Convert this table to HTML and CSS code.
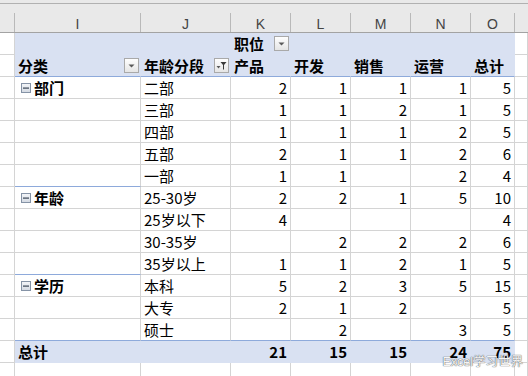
FILE: index.html
```html
<!DOCTYPE html>
<html lang="zh">
<head>
<meta charset="utf-8">
<title>数据透视表</title>
<link rel="stylesheet" href="styles.css">
</head>
<body>
<div class="sheet">
  <div class="topline"></div>
  <div class="row colheads">
    <div class="ch"></div>
    <div class="ch">I</div>
    <div class="ch">J</div>
    <div class="ch">K</div>
    <div class="ch">L</div>
    <div class="ch">M</div>
    <div class="ch">N</div>
    <div class="ch">O</div>
    <div class="ch end"></div>
  </div>

  <div class="row">
    <div class="c"></div>
    <div class="c pv"></div>
    <div class="c pv"></div>
    <div class="c pv fld"><span class="b">职位</span><svg class="btn" width="15" height="15" viewBox="0 0 15 15"><defs><linearGradient id="g1" x1="0" y1="0" x2="0" y2="1"><stop offset="0" stop-color="#ffffff"/><stop offset="1" stop-color="#e4e4e4"/></linearGradient></defs><rect x="0.5" y="0.5" width="14" height="14" fill="url(#g1)" stroke="#a9a9a9"/><polygon points="4.5,6.5 10.5,6.5 7.5,9.5" fill="#5a5a5a"/></svg></div>
    <div class="c pv"></div>
    <div class="c pv"></div>
    <div class="c pv"></div>
    <div class="c pv"></div>
    <div class="c"></div>
  </div>

  <div class="row hdr2">
    <div class="c"></div>
    <div class="c pv fld"><span class="b">分类</span><svg class="btn" width="15" height="15" viewBox="0 0 15 15"><rect x="0.5" y="0.5" width="14" height="14" fill="url(#g1)" stroke="#a9a9a9"/><polygon points="4.5,6.5 10.5,6.5 7.5,9.5" fill="#5a5a5a"/></svg></div>
    <div class="c pv fld"><span class="b">年龄分段</span><svg class="btn" width="15" height="15" viewBox="0 0 15 15"><rect x="0.5" y="0.5" width="14" height="14" fill="url(#g1)" stroke="#a9a9a9"/><polygon points="2.5,8 6.5,8 4.5,10.5" fill="#5a5a5a"/><polygon points="6.5,4 12.5,4 10,7 10,11.5 9,11.5 9,7" fill="#3a3a3a"/></svg></div>
    <div class="c pv t b">产品</div>
    <div class="c pv t b">开发</div>
    <div class="c pv t b">销售</div>
    <div class="c pv t b">运营</div>
    <div class="c pv t b">总计</div>
    <div class="c"></div>
  </div>

  <!-- 部门 -->
  <div class="row">
    <div class="c"></div>
    <div class="c grp"><svg class="minus" width="10" height="10" viewBox="0 0 10 10"><defs><linearGradient id="g2" x1="0" y1="0" x2="0" y2="1"><stop offset="0" stop-color="#f4f6f9"/><stop offset="1" stop-color="#d3d9e2"/></linearGradient></defs><rect x="0.5" y="0.5" width="9" height="9" fill="url(#g2)" stroke="#8593a6"/><rect x="2" y="4.5" width="6" height="1.2" fill="#3b4656"/></svg><span class="b">部门</span></div>
    <div class="c t">二部</div>
    <div class="c n">2</div><div class="c n">1</div><div class="c n">1</div><div class="c n">1</div><div class="c n">5</div>
    <div class="c"></div>
  </div>
  <div class="row">
    <div class="c"></div><div class="c"></div>
    <div class="c t">三部</div>
    <div class="c n">1</div><div class="c n">1</div><div class="c n">2</div><div class="c n">1</div><div class="c n">5</div>
    <div class="c"></div>
  </div>
  <div class="row">
    <div class="c"></div><div class="c"></div>
    <div class="c t">四部</div>
    <div class="c n">1</div><div class="c n">1</div><div class="c n">1</div><div class="c n">2</div><div class="c n">5</div>
    <div class="c"></div>
  </div>
  <div class="row">
    <div class="c"></div><div class="c"></div>
    <div class="c t">五部</div>
    <div class="c n">2</div><div class="c n">1</div><div class="c n">1</div><div class="c n">2</div><div class="c n">6</div>
    <div class="c"></div>
  </div>
  <div class="row">
    <div class="c"></div><div class="c gend"></div>
    <div class="c t">一部</div>
    <div class="c n">1</div><div class="c n">1</div><div class="c n"></div><div class="c n">2</div><div class="c n">4</div>
    <div class="c"></div>
  </div>

  <!-- 年龄 -->
  <div class="row">
    <div class="c"></div>
    <div class="c grp"><svg class="minus" width="10" height="10" viewBox="0 0 10 10"><rect x="0.5" y="0.5" width="9" height="9" fill="url(#g2)" stroke="#8593a6"/><rect x="2" y="4.5" width="6" height="1.2" fill="#3b4656"/></svg><span class="b">年龄</span></div>
    <div class="c t">25-30岁</div>
    <div class="c n">2</div><div class="c n">2</div><div class="c n">1</div><div class="c n">5</div><div class="c n">10</div>
    <div class="c"></div>
  </div>
  <div class="row">
    <div class="c"></div><div class="c"></div>
    <div class="c t">25岁以下</div>
    <div class="c n">4</div><div class="c n"></div><div class="c n"></div><div class="c n"></div><div class="c n">4</div>
    <div class="c"></div>
  </div>
  <div class="row">
    <div class="c"></div><div class="c"></div>
    <div class="c t">30-35岁</div>
    <div class="c n"></div><div class="c n">2</div><div class="c n">2</div><div class="c n">2</div><div class="c n">6</div>
    <div class="c"></div>
  </div>
  <div class="row">
    <div class="c"></div><div class="c gend"></div>
    <div class="c t">35岁以上</div>
    <div class="c n">1</div><div class="c n">1</div><div class="c n">2</div><div class="c n">1</div><div class="c n">5</div>
    <div class="c"></div>
  </div>

  <!-- 学历 -->
  <div class="row">
    <div class="c"></div>
    <div class="c grp"><svg class="minus" width="10" height="10" viewBox="0 0 10 10"><rect x="0.5" y="0.5" width="9" height="9" fill="url(#g2)" stroke="#8593a6"/><rect x="2" y="4.5" width="6" height="1.2" fill="#3b4656"/></svg><span class="b">学历</span></div>
    <div class="c t">本科</div>
    <div class="c n">5</div><div class="c n">2</div><div class="c n">3</div><div class="c n">5</div><div class="c n">15</div>
    <div class="c"></div>
  </div>
  <div class="row">
    <div class="c"></div><div class="c"></div>
    <div class="c t">大专</div>
    <div class="c n">2</div><div class="c n">1</div><div class="c n">2</div><div class="c n"></div><div class="c n">5</div>
    <div class="c"></div>
  </div>
  <div class="row last">
    <div class="c"></div><div class="c gend"></div>
    <div class="c t">硕士</div>
    <div class="c n"></div><div class="c n">2</div><div class="c n"></div><div class="c n">3</div><div class="c n">5</div>
    <div class="c"></div>
  </div>

  <!-- 总计 -->
  <div class="row">
    <div class="c"></div>
    <div class="c pv t b">总计</div>
    <div class="c pv"></div>
    <div class="c pv n b">21</div><div class="c pv n b">15</div><div class="c pv n b">15</div><div class="c pv n b">24</div><div class="c pv n b">75</div>
    <div class="c"></div>
  </div>

  <div class="row">
    <div class="c"></div><div class="c"></div><div class="c"></div>
    <div class="c"></div><div class="c"></div><div class="c"></div><div class="c"></div><div class="c"></div>
    <div class="c"></div>
  </div>

  <div class="watermark">Excel学习世界</div>
</div>
</body>
</html>
```

FILE: styles.css
```css
html, body {
  margin: 0;
  padding: 0;
  background: #ffffff;
}

.sheet {
  position: relative;
  width: 528px;
  height: 376px;
  overflow: hidden;
  font-family: "Noto Sans CJK SC", "Noto Sans", sans-serif;
  font-size: 15px;
  color: #000;
}

.topline {
  height: 3px;
  background: #e9e9e9;
  border-bottom: 1px solid #b1b1b1;
}

.row {
  display: grid;
  grid-template-columns: 15px 126px 90px 60px 60px 60px 60px 44px 1fr;
  height: 22px;
}

.colheads {
  height: 29px;
  padding-top: 9px;
  box-sizing: border-box;
  background: #e9e9e9;
  border-bottom: 1px solid #a3a3a3;
}

.ch {
  box-sizing: border-box;
  height: 19px;
  border-right: 1px solid #b9b9b9;
  font-family: "Liberation Sans", Arial, sans-serif;
  font-size: 14px;
  color: #444;
  text-align: center;
  line-height: 22px;
}

.ch.end {
  border-right: none;
}

.c {
  box-sizing: border-box;
  height: 22px;
  border-right: 1px solid #d4d4d4;
  border-bottom: 1px solid #d4d4d4;
  line-height: 21px;
  white-space: nowrap;
  overflow: hidden;
}

.t {
  padding-left: 3px;
}

.n {
  text-align: right;
  padding-right: 3px;
}

.b {
  font-weight: bold;
}

.pv {
  background: #d9e1f2;
  border-right-color: #d9e1f2;
  border-bottom-color: #d9e1f2;
}

.hdr2 .pv {
  border-bottom-color: #8eaadb;
}

.gend {
  border-bottom-color: #8eaadb;
}

.last .c:nth-child(n+2):nth-child(-n+8) {
  border-bottom-color: #8eaadb;
}

.fld {
  display: flex;
  align-items: center;
  justify-content: space-between;
  padding-left: 3px;
  padding-right: 1px;
}

.btn {
  display: block;
  flex: none;
}

.grp {
  display: flex;
  align-items: center;
  padding-left: 6px;
  gap: 3px;
}

.minus {
  display: block;
  flex: none;
}

.watermark {
  position: absolute;
  right: 5px;
  top: 354px;
  font-family: "Liberation Sans", "Noto Sans CJK SC", sans-serif;
  font-size: 12.5px;
  line-height: 16px;
  color: rgba(255, 255, 255, 0.95);
  text-shadow: 0 0 1px #5a5a5a, 0 0 1px #5a5a5a;
  white-space: nowrap;
}
```
